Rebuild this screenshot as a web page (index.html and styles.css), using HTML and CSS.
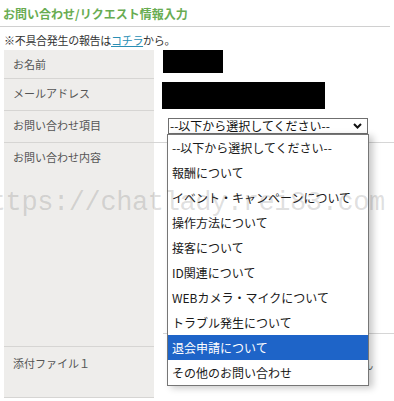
FILE: index.html
```html
<!DOCTYPE html>
<html lang="ja">
<head>
<meta charset="utf-8">
<link rel="stylesheet" href="styles.css">
</head>
<body>
<div class="page">
  <h1 class="title">お問い合わせ/リクエスト情報入力</h1>
  <p class="note">※不具合発生の報告は<a class="link" href="#">コチラ</a>から。</p>
  <div class="form">
    <div class="row row-name">
      <div class="label">お名前</div>
      <div class="value"><div class="redact redact-name"></div></div>
    </div>
    <div class="row row-mail">
      <div class="label">メールアドレス</div>
      <div class="value"><div class="redact redact-mail"></div></div>
    </div>
    <div class="row row-item">
      <div class="label">お問い合わせ項目</div>
      <div class="value value-line">
        <div class="select">
          <span class="select-text">--以下から選択してください--</span>
          <svg class="chev" width="9" height="6" viewBox="0 0 9 6"><path d="M1 1 L4.5 4.5 L8 1" fill="none" stroke="#111" stroke-width="2"/></svg>
        </div>
      </div>
    </div>
    <div class="row row-body">
      <div class="label">お問い合わせ内容</div>
      <div class="value"><div class="textarea"></div></div>
    </div>
    <div class="row row-file">
      <div class="label">添付ファイル１</div>
      <div class="value"><span class="file-text">選択されていません</span></div>
    </div>
  </div>

  <ul class="menu">
    <li class="opt">--以下から選択してください--</li>
    <li class="opt">報酬について</li>
    <li class="opt">イベント・キャンペーンについて</li>
    <li class="opt">操作方法について</li>
    <li class="opt">接客について</li>
    <li class="opt">ID関連について</li>
    <li class="opt">WEBカメラ・マイクについて</li>
    <li class="opt">トラブル発生について</li>
    <li class="opt opt-active">退会申請について</li>
    <li class="opt">その他のお問い合わせ</li>
  </ul>

  <div class="watermark">https://chatlady.rei83.com</div>
</div>
</body>
</html>
```

FILE: styles.css
```css
* { box-sizing: border-box; }
html, body { margin: 0; padding: 0; background: #fff; }
body {
  width: 394px;
  height: 401px;
  overflow: hidden;
  font-family: "Noto Sans CJK JP", "Noto Sans", sans-serif;
  color: #555;
}
.page { position: relative; width: 394px; height: 401px; overflow: hidden; }

.title {
  margin: 0 4px 0 0;
  padding: 5px 0 4px 3px;
  font-size: 12px;
  line-height: 17px;
  font-weight: bold;
  color: #68ac52;
  border-bottom: 1px solid #d0d0d0;
}
.note {
  margin: 0;
  padding: 5px 0 2px 4px;
  font-size: 11px;
  line-height: 16px;
  letter-spacing: -0.3px;
  color: #333;
}
.link { color: #2a8fb5; text-decoration: underline; }

.form { display: flex; flex-direction: column; padding-left: 4px; }
.row { display: flex; }
.label {
  width: 150px;
  flex: none;
  background: #eeedeb;
  border-bottom: 1px solid #d6d5d3;
  padding: 6px 0 0 9px;
  font-size: 11px;
  line-height: 16px;
  color: #555;
}
.value { flex: 1; padding-left: 9px; }

.row-name { height: 29px; }
.row-mail { height: 32px; }
.row-item { height: 32px; }
.row-body { height: 204px; }
.row-file { height: 51px; }
.row-file .label { padding-top: 8px; }

.redact { background: #000; }
.redact-name { width: 60px; height: 23px; }
.redact-mail { width: 163px; height: 27px; margin-top: 3px; margin-left: -1px; }

.value-line { border-bottom: 1px solid #d6d6d6; }
.select {
  margin-top: 7px;
  margin-left: 5px;
  width: 200px;
  height: 16px;
  border: 1px solid #6f6f6f;
  display: flex;
  align-items: center;
  justify-content: space-between;
  padding: 0 5px 0 1px;
  font-size: 12px;
  line-height: 14px;
  color: #111;
}
.chev { display: block; }

.textarea { height: 191px; border-bottom: 1px solid #d6d6d6; }
.file-text {
  display: inline-block;
  margin-top: 10px;
  margin-left: 112px;
  font-size: 11px;
  line-height: 14px;
  color: #666;
}

.menu {
  position: absolute;
  left: 167px;
  top: 134px;
  width: 202px;
  margin: 0;
  padding: 0;
  list-style: none;
  background: #fff;
  border: 1px solid #767676;
  box-shadow: 4px 2px 7px rgba(0, 0, 0, 0.22);
}
.opt {
  height: 25px;
  padding-left: 4px;
  font-size: 12px;
  line-height: 25px;
  color: #1a1a1a;
  white-space: nowrap;
}
.opt-active { background: #1e64c8; color: #fff; }

.watermark {
  position: absolute;
  left: -26px;
  top: 183px;
  font-family: "Liberation Mono", monospace;
  font-size: 27px;
  line-height: 40px;
  letter-spacing: -0.4px;
  color: rgba(90, 90, 90, 0.2);
  white-space: nowrap;
  pointer-events: none;
}
```
